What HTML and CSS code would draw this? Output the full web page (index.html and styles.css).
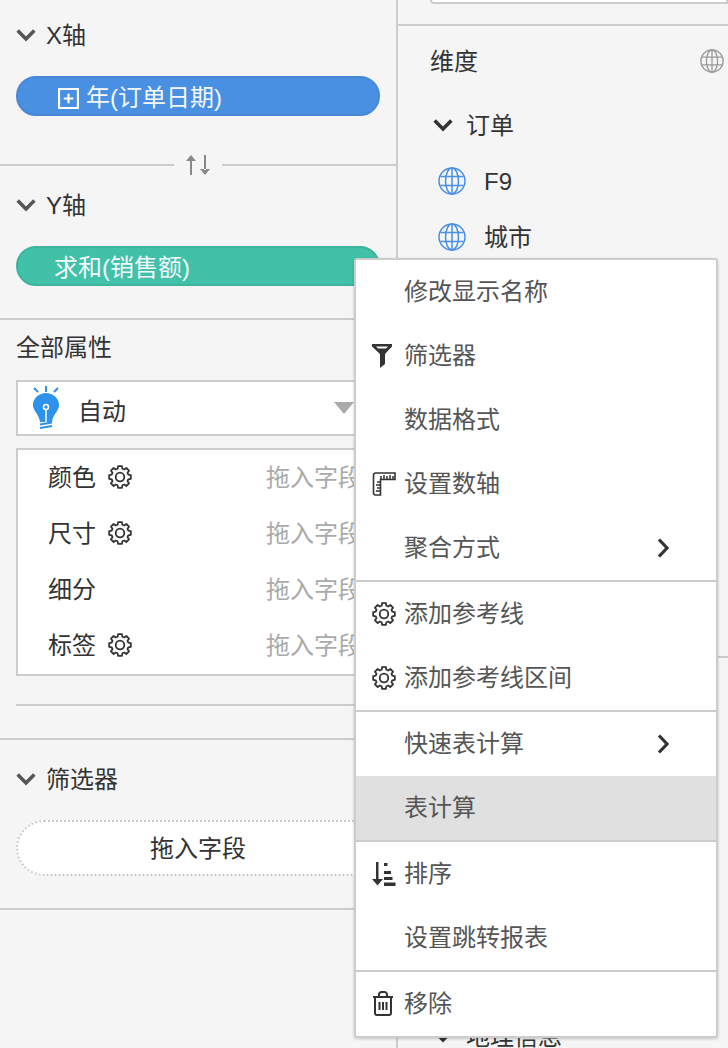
FILE: index.html
```html
<!DOCTYPE html>
<html lang="zh-CN">
<head>
<meta charset="utf-8">
<title>图表属性</title>
<link rel="stylesheet" href="styles.css">
</head>
<body>
<svg class="defs" aria-hidden="true">
  <symbol id="gear" viewBox="0 0 24 24"><g transform="translate(12 12)" fill="none" stroke="currentColor" stroke-width="1.8" stroke-linejoin="round"><circle r="4.300"/><path d="M8.270-2.370 10.830-1.910 10.830 1.910 8.270 2.370 7.520 4.170 9.010 6.310 6.310 9.010 4.170 7.520 2.370 8.270 1.910 10.830-1.910 10.830-2.370 8.270-4.170 7.520-6.310 9.010-9.010 6.310-7.520 4.170-8.270 2.370-10.830 1.910-10.830-1.910-8.270-2.370-7.520-4.170-9.010-6.310-6.310-9.010-4.170-7.520-2.370-8.270-1.910-10.830 1.910-10.830 2.370-8.270 4.170-7.520 6.310-9.010 9.010-6.310 7.520-4.170z"/></g></symbol>
  <symbol id="globe" viewBox="0 0 28 28"><g fill="none" stroke="currentColor" stroke-width="1.5"><circle cx="14" cy="14" r="13"/><ellipse cx="14" cy="14" rx="6.5" ry="13"/><path d="M14 1v26M2.500 9.500h23M2.500 18.500h23"/></g></symbol>
  <symbol id="chev" viewBox="0 0 18 12"><path fill="none" stroke="currentColor" stroke-width="3.2" d="M1.500 2 9 9.500 16.500 2"/></symbol>
  <symbol id="chev-r" viewBox="0 0 12 20"><path fill="none" stroke="currentColor" stroke-width="3.2" d="M2 1.500 10 10 2 18.500"/></symbol>
</svg>
<div class="page">
  <aside class="left">
    <section class="axis">
      <div class="head head-x"><svg class="chev"><use href="#chev"/></svg><span>X轴</span></div>
      <div class="pill pill-blue">
        <svg class="plus" viewBox="0 0 22 22"><path fill="none" stroke="#fff" stroke-width="2.200" d="M1.100 1.100h19.800v19.800H1.100zM11 6v10M6 11h10"/></svg>
        <span>年(订单日期)</span>
      </div>
    </section>
    <div class="swap">
      <i class="swap-line swap-short"></i>
      <svg class="swap-icon" viewBox="0 0 26 20"><path fill="#888" d="M5 5h2v15H5zM1 6 6 0 11 6zM19 0h2v15h-2zM15 14 20 20 25 14z"/></svg>
      <i class="swap-line"></i>
    </div>
    <section class="axis axis-y">
      <div class="head head-y"><svg class="chev"><use href="#chev"/></svg><span>Y轴</span></div>
      <div class="pill pill-green"><span>求和(销售额)</span></div>
    </section>
    <section class="props">
      <div class="props-title">全部属性</div>
      <div class="select">
        <svg class="bulb" viewBox="0 0 26 44">
          <g stroke="#2d92ec" stroke-width="2" fill="none"><path d="M13 0v6M1 2l4 4M25 2l-4 4"/></g>
          <path fill="#2d92ec" d="M13 7C6 7 0 12 0 19c0 6 6 9 7 17h12c1-8 7-11 7-17 0-7-6-12-13-12z"/>
          <circle cx="13" cy="21" r="2.500" fill="none" stroke="#fff" stroke-width="1.500"/>
          <path stroke="#fff" stroke-width="1.500" d="M13 24v12"/>
          <path stroke="#2d92ec" stroke-width="2" d="M7 38.500l12-2M7 42l12-2"/>
        </svg>
        <span>自动</span>
        <i class="caret"></i>
      </div>
      <div class="fields">
        <div class="field"><span class="field-name">颜色</span><svg class="gear"><use href="#gear"/></svg><span class="field-drop">拖入字段</span></div>
        <div class="field"><span class="field-name">尺寸</span><svg class="gear"><use href="#gear"/></svg><span class="field-drop">拖入字段</span></div>
        <div class="field"><span class="field-name">细分</span><span class="field-drop">拖入字段</span></div>
        <div class="field"><span class="field-name">标签</span><svg class="gear"><use href="#gear"/></svg><span class="field-drop">拖入字段</span></div>
      </div>
      <div class="rule"></div>
    </section>
    <section class="filter">
      <div class="head head-f"><svg class="chev"><use href="#chev"/></svg><span>筛选器</span></div>
      <div class="drop">拖入字段</div>
    </section>
  </aside>
  <main class="right">
    <div class="search-wrap"><div class="search"></div></div>
    <div class="dim">
      <div class="dim-head"><span>维度</span><svg class="globe globe-grey"><use href="#globe"/></svg></div>
      <div class="group"><svg class="chev chev-dark"><use href="#chev"/></svg><span>订单</span></div>
      <div class="item"><svg class="globe"><use href="#globe"/></svg><span>F9</span></div>
      <div class="item"><svg class="globe"><use href="#globe"/></svg><span>城市</span></div>
    </div>
    <div class="measure">
      <div class="group group-geo"><svg class="chev chev-dark"><use href="#chev"/></svg><span>地理信息</span></div>
    </div>
  </main>
</div>
<div class="menu">
  <div class="menu-group">
    <div class="menu-item"><span>修改显示名称</span></div>
    <div class="menu-item">
      <svg class="mi" viewBox="2 1 24 24"><path fill="#333" d="M2 1h20v2.500l-7 7.500V21l-5 4V11L2 3.500z"/><path fill="#fff" d="M6 3.500h12l-2 2H8z"/></svg>
      <span>筛选器</span></div>
    <div class="menu-item"><span>数据格式</span></div>
    <div class="menu-item">
      <svg class="mi" viewBox="0 0 24 24"><path fill="none" stroke="#333" stroke-width="1.600" d="M1.500 3A2 2 0 0 1 3.500 1H23v6.500H8.500V23H3.500A2 2 0 0 1 1.500 21z"/><path fill="none" stroke="#333" stroke-width="1.500" d="M9 7V4M12 7V3M15 7V4M18 7V3M21 7V4M8 10H5M8 13H4M8 16H5M8 19H4"/></svg>
      <span>设置数轴</span></div>
    <div class="menu-item"><span>聚合方式</span><svg class="chev-r"><use href="#chev-r"/></svg></div>
  </div>
  <div class="menu-group">
    <div class="menu-item"><svg class="mi"><use href="#gear"/></svg><span>添加参考线</span></div>
    <div class="menu-item"><svg class="mi"><use href="#gear"/></svg><span>添加参考线区间</span></div>
  </div>
  <div class="menu-group">
    <div class="menu-item"><span>快速表计算</span><svg class="chev-r"><use href="#chev-r"/></svg></div>
    <div class="menu-item menu-item-on"><span>表计算</span></div>
  </div>
  <div class="menu-group">
    <div class="menu-item">
      <svg class="mi" viewBox="0 0 24 24"><path fill="#333" d="M4 0h2.500v18H4zM0 17h11l-5.500 6.500zM12 1h3.500v3H12zM12 9h7v3h-7zM12 15h8.500v3H12zM12 20.500h11.500V24H12z"/></svg>
      <span>排序</span></div>
    <div class="menu-item"><span>设置跳转报表</span></div>
  </div>
  <div class="menu-group">
    <div class="menu-item">
      <svg class="mi mi-trash" viewBox="0 0 22 25"><g fill="none" stroke="#333" stroke-width="2"><path d="M1 6h20M7 6V3.500A2.500 2.500 0 0 1 9.500 1h3A2.500 2.500 0 0 1 15 3.500V6M3 6v16a2 2 0 0 0 2 2h12a2 2 0 0 0 2-2V6M7.500 11v8M11 11v8M14.500 11v8"/></g></svg>
      <span>移除</span></div>
  </div>
</div>
</body>
</html>
```
FILE: styles.css
```css
* { box-sizing: border-box; }
html, body { margin: 0; height: 100%; overflow: hidden; }
body {
  background: #f5f5f5;
  color: #333;
  font-family: "Liberation Sans", "Noto Sans CJK SC", sans-serif;
  font-size: 24px;
  line-height: 32px;
  font-weight: 400;
}
.defs { position: absolute; width: 0; height: 0; }
.page { display: flex; height: 1048px; }

.left { width: 398px; flex: none; border-right: 2px solid #ccc; }
.right { flex: 1; min-width: 0; }

.head { display: flex; align-items: center; padding-left: 16px; }
.head span { margin-left: 10px; padding-top: 2px; }
.head-x { height: 70px; }
.head-y { height: 78px; }
.head-f { height: 78px; }
.chev { width: 20px; height: 14px; color: #555; flex: none; }

.axis { height: 164px; }
.axis-y { height: 154px; border-bottom: 2px solid #ccc; }
.pill {
  display: flex;
  align-items: center;
  height: 40px;
  margin: 6px 16px 0;
  border-radius: 20px;
  color: #f4f8fd;
  border: 2px solid;
}
.pill span { padding-top: 4px; }
.axis-y .pill { margin-top: 2px; }
.pill-blue { background: #4a90e2; border-color: #4788d5; padding-left: 40px; }
.pill-green { background: #41c1a8; border-color: #3db59e; padding-left: 36px; }
.plus { width: 21px; height: 21px; margin: 5px 7px 0 0; flex: none; }

.swap { display: flex; align-items: center; height: 2px; }
.swap-line { flex: 1; height: 2px; background: #ccc; }
.swap-short { flex: none; width: 174px; }
.swap-icon { width: 48px; height: 20px; flex: none; overflow: visible; }

.props { height: 420px; border-bottom: 2px solid #ccc; padding: 0 16px; }
.props-title { height: 60px; padding-top: 12px; }
.select {
  display: flex;
  align-items: center;
  height: 56px;
  background: #fff;
  border: 2px solid #ccc;
  padding-left: 15px;
  position: relative;
}
.select span { margin-left: 19px; margin-top: 8px; }
.bulb { width: 26px; height: 44px; flex: none; }
.caret {
  margin-left: auto;
  margin-right: 24px;
  width: 0;
  height: 0;
  border: 10px solid transparent;
  border-top: 12px solid #aaa;
  border-bottom: 0;
}
.fields { margin-top: 12px; height: 228px; background: #fff; border: 2px solid #ccc; }
.field { display: flex; align-items: center; height: 56px; padding-left: 30px; position: relative; }
.field-name { width: 60px; }
.field-drop { position: absolute; left: 248px; color: #aaa; white-space: nowrap; }
.gear { width: 24px; height: 24px; margin-top: -2px; color: #333; flex: none; }
.rule { margin-top: 28px; height: 2px; background: #ccc; }

.filter { height: 170px; border-bottom: 2px solid #ccc; }
.drop {
  height: 56px;
  margin: 2px 16px 0;
  background: #fff;
  border: 2px dotted #ccc;
  border-radius: 28px;
  text-align: center;
  line-height: 54px;
}

.search-wrap { height: 26px; border-bottom: 2px solid #ccc; padding-left: 32px; }
.search { height: 4px; background: #fff; border: 2px solid #ccc; border-top: 0; border-radius: 0 0 0 4px; }
.dim { height: 632px; padding: 0 4px 0 33px; border-bottom: 2px solid #ccc; }
.dim-head { display: flex; align-items: center; justify-content: space-between; height: 70px; }
.dim-head span { margin-left: -1px; padding-top: 2px; }
.group { display: flex; align-items: center; height: 57px; margin-left: 2px; }
.group span { margin-left: 13px; padding-top: 2px; }
.chev-dark { color: #333; }
.item { display: flex; align-items: center; height: 56px; padding-left: 7px; }
.item span { margin-left: 18px; padding-top: 2px; }
.globe { width: 28px; height: 28px; color: #4a90e2; flex: none; }
.globe-grey { width: 24px; height: 24px; color: #999; }
.measure { padding: 349px 0 0 33px; }

.menu {
  position: absolute;
  left: 354px;
  top: 258px;
  width: 364px;
  height: 780px;
  background: #fff;
  border: 2px solid #ccc;
  border-radius: 3px;
  box-shadow: 0 1px 3px rgba(0, 0, 0, .2);
  color: #555;
}
.menu-group + .menu-group { border-top: 2px solid #ccc; }
.menu-item { display: flex; align-items: center; height: 64px; padding: 0 47px 0 48px; position: relative; }
.menu-item-on { background: #e0e0e0; }
.mi { position: absolute; left: 16px; top: 20px; width: 24px; height: 24px; color: #333; }
.mi-trash { top: 19px; width: 22px; height: 25px; }
.chev-r { width: 12px; height: 20px; margin-left: auto; color: #333; }
```
